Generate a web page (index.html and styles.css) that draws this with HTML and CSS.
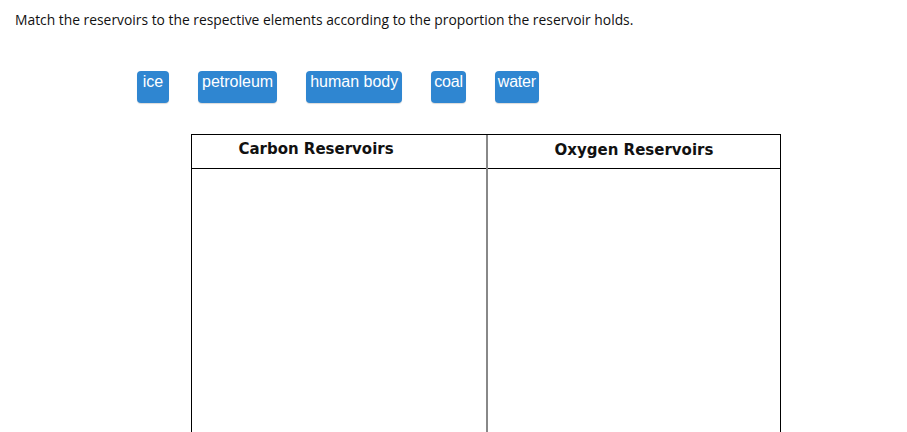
FILE: index.html
```html
<!DOCTYPE html>
<html>
<head>
<meta charset="utf-8">
<link rel="stylesheet" href="styles.css">
</head>
<body>
<p class="prompt">Match the reservoirs to the respective elements according to the proportion the reservoir holds.</p>
<div class="chips">
  <span class="chip chip-min">ice</span>
  <span class="chip">petroleum</span>
  <span class="chip">human body</span>
  <span class="chip chip-tight">coal</span>
  <span class="chip chip-tight">water</span>
</div>
<div class="board">
  <div class="col col-left">
    <div class="head head-left">Carbon Reservoirs</div>
    <div class="drop"></div>
  </div>
  <div class="col col-right">
    <div class="head">Oxygen Reservoirs</div>
    <div class="drop"></div>
  </div>
</div>
</body>
</html>
```
FILE: styles.css
```css
html, body {
  margin: 0;
  padding: 0;
  background: #fff;
}
body {
  overflow: hidden;
}
.prompt {
  margin: 0;
  padding: 11px 0 0 15px;
  font-family: "Open Sans", sans-serif;
  font-size: 13.85px;
  line-height: 18px;
  color: #111;
}
.chips {
  display: flex;
  gap: 29px;
  padding: 42px 0 0 137px;
}
.chip {
  box-sizing: border-box;
  height: 32px;
  padding: 2px 4px 0;
  background: #2f86d1;
  color: #fff;
  font-family: "Liberation Sans", Arial, sans-serif;
  font-size: 16px;
  line-height: 18px;
  border-radius: 4px;
  text-align: center;
  box-shadow: 0 1px 1px rgba(0,0,0,0.15);
}
.chip-min {
  min-width: 32px;
}
.chip-tight {
  padding-left: 3px;
  padding-right: 3px;
  letter-spacing: -0.2px;
}
.board {
  display: flex;
  margin: 31px 0 0 191px;
  width: 590px;
  height: 299px;
  border: 1px solid #000;
  box-sizing: border-box;
}
.col {
  display: flex;
  flex-direction: column;
}
.col-left {
  width: 294px;
  border-right: 2px solid #888;
}
.col-right {
  flex: 1;
}
.head {
  box-sizing: border-box;
  height: 34px;
  padding-top: 7px;
  border-bottom: 1px solid #000;
  font-family: "DejaVu Sans", Verdana, sans-serif;
  font-weight: bold;
  font-size: 15px;
  line-height: 17px;
  text-align: center;
  color: #111;
}
.head-left {
  padding-top: 6px;
  padding-right: 46px;
}
.drop {
  flex: 1;
}
```
